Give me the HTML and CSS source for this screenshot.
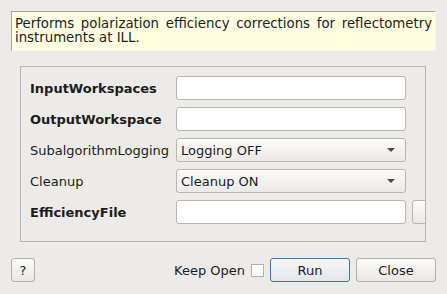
FILE: index.html
```html
<!DOCTYPE html>
<html lang="en">
<head>
    <meta charset="UTF-8">
    <title>PolarizationEfficiencyCor</title>
    <link rel="stylesheet" href="styles.css">
</head>
<body>
    <div class="desc">Performs polarization efficiency corrections for reflectometry instruments at ILL.</div>

    <div class="group">
        <div class="props">
            <label class="bold">InputWorkspaces</label>
            <div class="field"></div>
            <div></div>

            <label class="bold">OutputWorkspace</label>
            <div class="field"></div>
            <div></div>

            <label>SubalgorithmLogging</label>
            <div class="combo"><span>Logging OFF</span><span class="arrow"></span></div>
            <div></div>

            <label>Cleanup</label>
            <div class="combo"><span>Cleanup ON</span><span class="arrow"></span></div>
            <div></div>

            <label class="bold">EfficiencyFile</label>
            <div class="field"></div>
            <div class="browse"></div>
        </div>
    </div>

    <div class="footer">
        <button class="btn help">?</button>
        <div class="spacer"></div>
        <span class="keep">Keep Open</span>
        <span class="check"></span>
        <button class="btn run">Run</button>
        <button class="btn">Close</button>
    </div>
</body>
</html>
```

FILE: styles.css
```css
body {
    margin: 0;
    background: #edebe7;
    font-family: "DejaVu Sans", sans-serif;
    font-size: 13px;
    color: #1c1c1c;
    width: 447px;
    height: 294px;
    overflow: hidden;
}
.desc {
    margin: 11px 11px 0 11px;
    height: 40px;
    box-sizing: border-box;
    padding: 5px 3px 0 3px;
    background: #fffee0;
    border-top: 1px solid #a9a59f;
    border-left: 1px solid #a9a59f;
    border-right: 1px solid #f6f5f3;
    border-bottom: 1px solid #f6f5f3;
    text-align: justify;
    font-size: 13.3px;
    line-height: 14px;
}
.group {
    margin: 15px 21px 0 20px;
    height: 176px;
    box-sizing: border-box;
    border: 1px solid #b6b2ac;
    padding: 9px 0 0 9px;
    overflow: hidden;
}
.props {
    display: grid;
    grid-template-columns: 146px 230px 1fr;
    grid-auto-rows: 24px;
    row-gap: 7px;
    align-items: center;
}
.props label {
    white-space: nowrap;
}
.bold {
    font-weight: bold;
}
.field {
    height: 24px;
    box-sizing: border-box;
    border: 1px solid #b9b5af;
    border-radius: 3px;
    background: #fff;
}
.combo {
    height: 24px;
    box-sizing: border-box;
    border: 1px solid #b9b5af;
    border-radius: 3px;
    background: linear-gradient(#fcfcfb, #ebe9e6);
    display: flex;
    align-items: center;
    justify-content: space-between;
    padding: 0 10px 0 4px;
}
.arrow {
    width: 0;
    height: 0;
    border-left: 4px solid transparent;
    border-right: 4px solid transparent;
    border-top: 4px solid #4a4a4a;
}
.browse {
    margin-left: 6px;
    width: 40px;
    height: 24px;
    box-sizing: border-box;
    border: 1px solid #b9b5af;
    border-radius: 3px;
    background: linear-gradient(#fcfcfb, #ebe9e6);
}
.footer {
    display: flex;
    align-items: center;
    margin: 16px 11px 0 11px;
    height: 24px;
}
.spacer {
    flex: 1;
}
.btn {
    width: 80px;
    height: 24px;
    box-sizing: border-box;
    border: 1px solid #b3afa9;
    border-radius: 3px;
    background: linear-gradient(#fcfcfb, #e9e7e3);
    font-family: "DejaVu Sans", sans-serif;
    font-size: 13px;
    color: #1c1c1c;
    padding: 0;
    margin-left: 6px;
}
.help {
    width: 24px;
    margin-left: 0;
}
.run {
    border-color: #3d78a8;
    background: linear-gradient(#f6f8fa, #e2e6ea);
}
.keep {
    margin-right: 6px;
}
.check {
    width: 13px;
    height: 13px;
    box-sizing: border-box;
    border: 1px solid #b3afa9;
    background: #fff;
}
```
